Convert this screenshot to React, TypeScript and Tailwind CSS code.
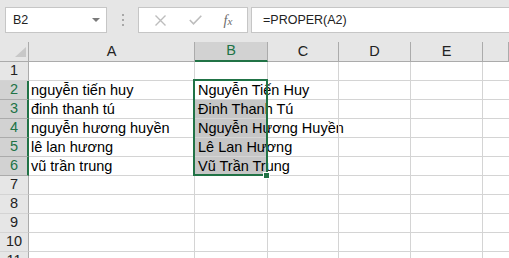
import * as React from "react"

const cols = ["A", "B", "C", "D", "E", ""]

const data: Record<number, [string, string]> = {
  2: ["nguyễn tiến huy", "Nguyễn Tiến Huy"],
  3: ["đinh thanh tú", "Đinh Thanh Tú"],
  4: ["nguyễn hương huyền", "Nguyễn Hương Huyền"],
  5: ["lê lan hương", "Lê Lan Hương"],
  6: ["vũ trần trung", "Vũ Trần Trung"],
}

const rows = [1, 2, 3, 4, 5, 6, 7, 8, 9, 10, 11]

function FormulaBar() {
  return (
    <div className="h-[42px] flex items-start pt-[7px] pl-[5px]">
      <div className="w-[102px] h-[26px] border border-[#c6c6c6] bg-white flex items-center justify-between pl-[7px] pr-[6px] text-[12.5px] text-[#222]">
        <span>B2</span>
        <svg width="8" height="5" viewBox="0 0 8 5">
          <path d="M0 0 L8 0 L4 4 Z" fill="#7a7a7a" />
        </svg>
      </div>
      <div className="w-[31px] h-[26px] flex flex-col items-center justify-center gap-[3px] pl-[1px]">
        <div className="w-[2px] h-[2px] bg-[#a8a8a8]" />
        <div className="w-[2px] h-[2px] bg-[#a8a8a8]" />
        <div className="w-[2px] h-[2px] bg-[#a8a8a8]" />
      </div>
      <div className="w-[110px] h-[26px] border border-[#c6c6c6] bg-white flex items-center">
        <div className="w-[40px] flex justify-center pl-[2px]">
          <svg width="11" height="11" viewBox="0 0 11 11">
            <path d="M0.5 0.5 L10.5 10.5 M10.5 0.5 L0.5 10.5" stroke="#bdbdbd" strokeWidth="1.4" />
          </svg>
        </div>
        <div className="w-[32px] flex justify-center">
          <svg width="13" height="10" viewBox="0 0 13 10">
            <path d="M0.8 5 L4.5 8.8 L12.3 0.8" stroke="#bdbdbd" strokeWidth="1.6" fill="none" />
          </svg>
        </div>
        <div className="flex-1 flex justify-center pr-[2px] text-[#6b6b6b] italic text-[14px] font-['Liberation_Serif',serif]">
          <span>
            f<span className="text-[11px]">x</span>
          </span>
        </div>
      </div>
      <div className="ml-[3px] flex-1 -mr-[4px] h-[26px] border border-[#c6c6c6] bg-white flex items-center pl-[11px] text-[12.5px] text-[#222]">
        =PROPER(A2)
      </div>
    </div>
  )
}

function Sheet() {
  return (
    <div className="relative">
      <div className="grid grid-cols-[29px_166px_73px_71px_72px_72px_1fr] bg-white">
        {/* header row */}
        <div className="h-[20px] bg-[#e6e6e6] border-r border-b border-[#ababab] relative">
          <svg className="absolute left-[15px] top-[5px]" width="11" height="10" viewBox="0 0 11 10">
            <path d="M11 0 L11 10 L0 10 Z" fill="#c8c8c8" />
          </svg>
        </div>
        {cols.map((c, i) =>
          c === "B" ? (
            <div
              key={i}
              className="h-[20px] bg-[#d2d2d2] border-r border-r-[#ababab] border-b-2 border-b-[#217346] flex items-center justify-center text-[14.5px] text-[#217346]"
            >
              {c}
            </div>
          ) : (
            <div
              key={i}
              className="h-[20px] bg-[#e6e6e6] border-r border-b border-[#ababab] flex items-center justify-center text-[14.5px] text-[#222]"
            >
              {c}
            </div>
          ),
        )}

        {rows.map((r) => {
          const sel = r >= 2 && r <= 6
          const d = data[r]
          return (
            <React.Fragment key={r}>
              <div
                className={
                  sel
                    ? "h-[19px] bg-[#d2d2d2] border-r-2 border-r-[#217346] border-b border-b-[#ababab] flex items-center justify-center pl-[1px] text-[14.5px] text-[#217346]"
                    : "h-[19px] bg-[#e6e6e6] border-r border-r-[#ababab] border-b border-b-[#d4d4d4] flex items-center justify-center text-[14.5px] text-[#222]"
                }
              >
                {r}
              </div>
              <div className="h-[19px] border-r border-b border-[#d4d4d4] pl-[2px] text-[14.5px] leading-[19px] text-black whitespace-nowrap">
                {d ? d[0] : ""}
              </div>
              <div
                className={
                  "h-[19px] border-r border-b border-[#d4d4d4] pl-[3px] text-[14.5px] leading-[19px] text-black whitespace-nowrap " +
                  (r >= 3 && r <= 6 ? "bg-[#c6c6c6]" : "")
                }
              >
                {d ? d[1] : ""}
              </div>
              <div className="h-[19px] border-r border-b border-[#d4d4d4]" />
              <div className="h-[19px] border-r border-b border-[#d4d4d4]" />
              <div className="h-[19px] border-r border-b border-[#d4d4d4]" />
              <div className="h-[19px] border-b border-[#d4d4d4]" />
            </React.Fragment>
          )
        })}
      </div>

      {/* selection B2:B6 */}
      <div className="absolute left-[193px] top-[37px] w-[75px] h-[97px] border-2 border-[#217346] pointer-events-none" />
      <div className="absolute left-[264px] top-[131px] w-[5px] h-[5px] bg-[#217346] outline outline-1 outline-white pointer-events-none" />
    </div>
  )
}

export default function App() {
  return (
    <div className="w-[509px] h-[258px] overflow-hidden bg-[#e6e6e6] font-['Liberation_Sans',Arial,sans-serif]">
      <FormulaBar />
      <Sheet />
    </div>
  )
}
